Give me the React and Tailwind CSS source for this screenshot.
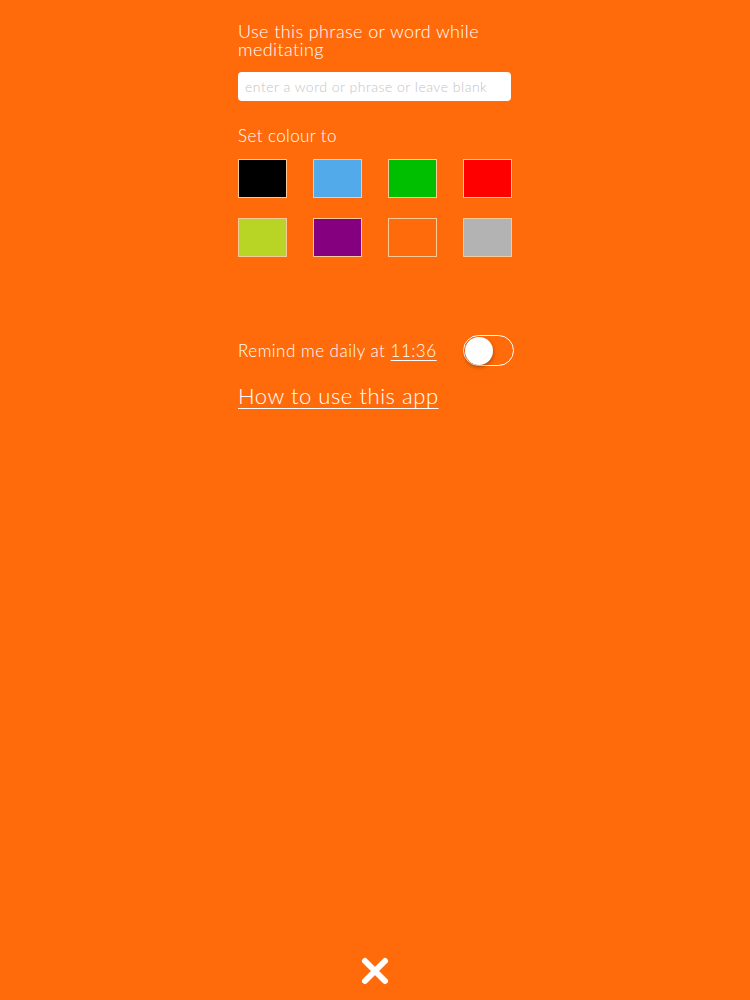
export default function App() {
  const swatches = [
    'bg-black',
    'bg-[#53aaea]',
    'bg-[#00bf00]',
    'bg-[#ff0000]',
    'bg-[#b8d424]',
    'bg-[#85007e]',
    'bg-[#ff6b0a]',
    'bg-[#b3b3b3]',
  ]

  return (
    <div className="min-h-[1000px] w-[750px] bg-[#ff6b0a] text-white font-['Lato','Noto_Sans',sans-serif] font-light flex flex-col">
      <div className="w-[276px] ml-[238px] pt-[22px]">
        <p className="text-[18px] leading-[18px] tracking-[0.4px]">Use this phrase or word while meditating</p>
        <input
          type="text"
          placeholder="enter a word or phrase or leave blank"
          className="mt-[14px] w-[273px] h-[29px] rounded-[4px] bg-white px-[7px] text-[14px] tracking-[0.5px] text-gray-700 placeholder:text-[#c4c4c4] outline-none"
        />
        <p className="mt-[25px] text-[17px] leading-[20px] tracking-[0.4px]">Set colour to</p>
        <div className="mt-[13px] grid grid-cols-4 gap-x-[26px] gap-y-[20px] w-[274px]">
          {swatches.map((c, i) => (
            <div key={i} className={`${c} w-[49px] h-[39px] border border-[#f9c998]`} />
          ))}
        </div>
        <div className="mt-[78px] flex items-center justify-between">
          <span className="text-[17px] tracking-[0.5px]">
            Remind me daily at <span className="underline decoration-1 underline-offset-[3px]">11:36</span>
          </span>
          <button className="w-[51px] h-[31px] rounded-full border border-white flex items-center px-[1px]">
            <span className="w-[28px] h-[28px] rounded-full bg-white shadow-[0_2px_4px_rgba(0,0,0,0.35)]" />
          </button>
        </div>
        <a className="mt-[13px] inline-block text-[22px] tracking-[0.55px] underline decoration-1 underline-offset-[4px]">How to use this app</a>
      </div>
      <div className="mt-auto flex justify-center pb-[14px]">
        <svg width="30" height="30" viewBox="0 0 30 30">
          <path d="M5 5 L25 25 M25 5 L5 25" stroke="white" strokeWidth="6" strokeLinecap="round" />
        </svg>
      </div>
    </div>
  )
}
